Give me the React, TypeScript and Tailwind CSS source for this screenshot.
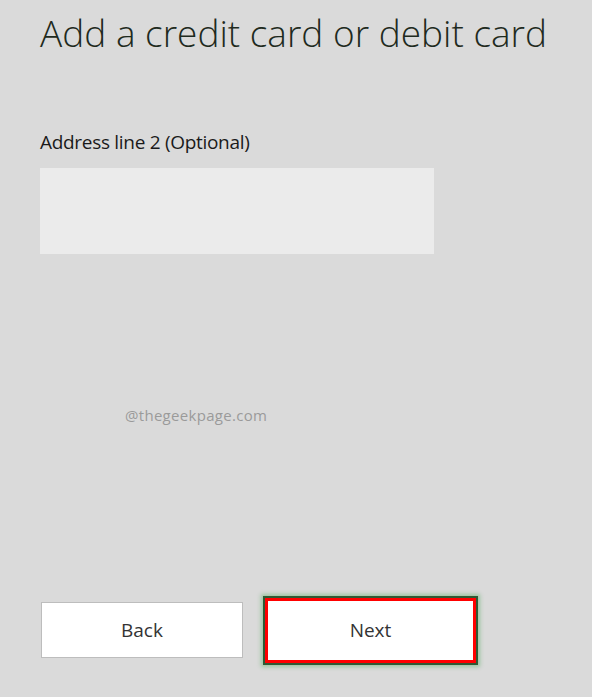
import React from "react";

export default function App() {
  return (
    <div className="w-[592px] h-[697px] bg-[#dadada] overflow-hidden flex flex-col pl-[40px]" style={{ fontFamily: '"Open Sans", "Noto Sans", sans-serif' }}>
      <h1 className="mt-[9px] text-[37px] leading-[48px] font-light text-[#1e2a20] whitespace-nowrap">
        Add a credit card or debit card
      </h1>
      <div className="mt-[72px] text-[19px] leading-[26px] text-[#1a1a1a] tracking-[-0.3px]">Address line 2 (Optional)</div>
      <div className="mt-[13px] w-[394px] h-[86px] bg-[#ebebeb]" />
      <div className="mt-[151px] pl-[85px] text-[15px] leading-[20px] text-[#9a9a9a] tracking-[0.3px]">@thegeekpage.com</div>
      <div className="mt-[171px] flex items-start">
        <button className="mt-[6px] ml-[1px] w-[202px] h-[56px] bg-white border border-[#bdbdbd] text-[19px] text-[#333] flex items-center justify-center">
          Back
        </button>
        <div className="ml-[20px] w-[215px] h-[69px] border-2 border-[#2f5a34] shadow-[0_0_4px_2px_rgba(80,170,90,0.45)]">
          <div className="w-full h-full border-[3px] border-[#ff0000] bg-white flex items-center justify-center text-[19px] text-[#333]">
            Next
          </div>
        </div>
      </div>
    </div>
  );
}
